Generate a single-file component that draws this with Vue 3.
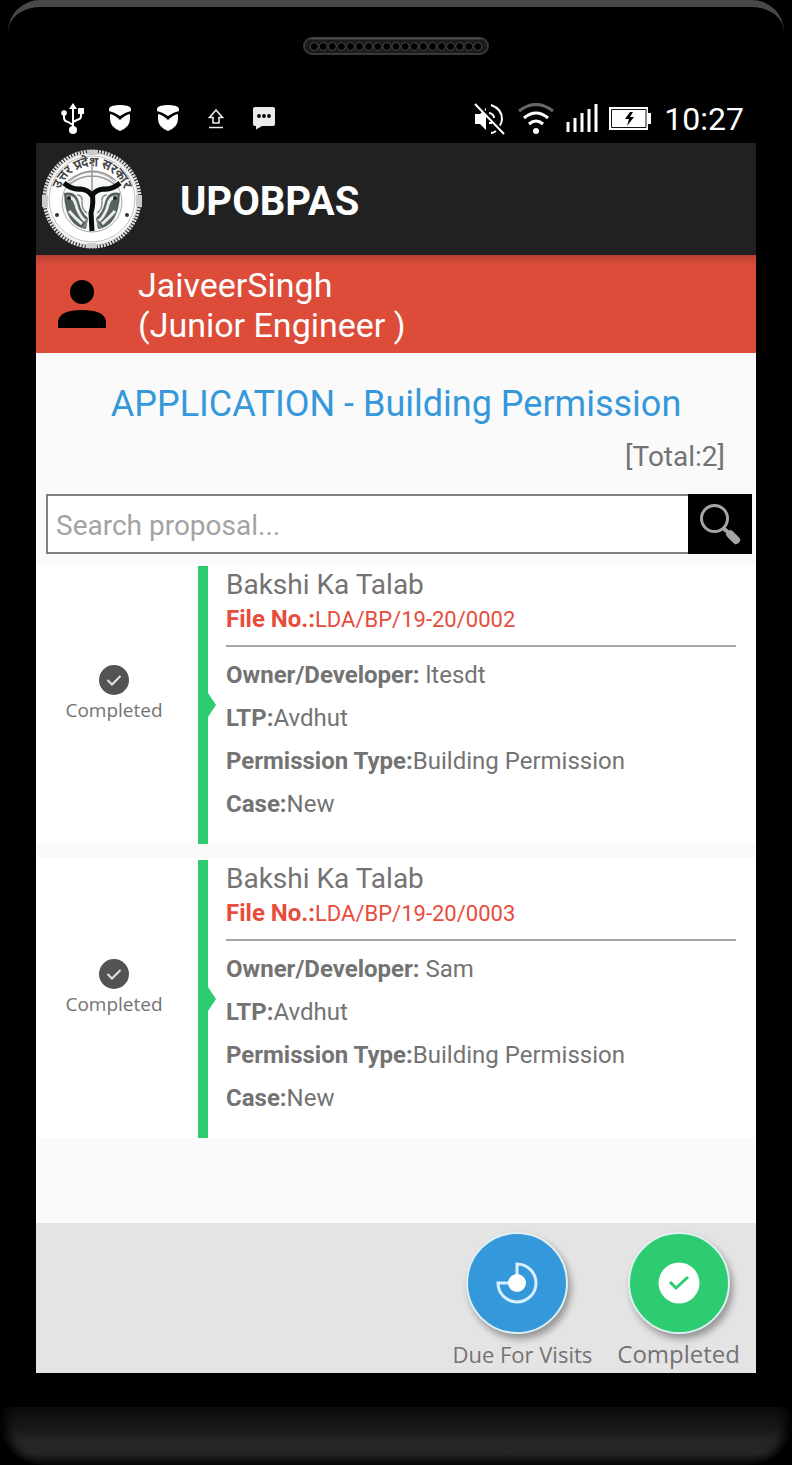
<template>
  <div class="phone">
    <div class="phone-top">
      <svg class="speaker" width="186" height="18" viewBox="0 0 186 18" aria-hidden="true">
        <rect x="1" y="1" width="184" height="16" rx="8" fill="#1c1c1c" stroke="#383838" stroke-width="2" />
        <path d="M8 1.5H178" stroke="#4a4a4a" stroke-width="2" />
        <circle v-for="n in 19" :key="n" :cx="2 + n * 9.1" cy="9.5" r="4" fill="#000" stroke="#484848" />
      </svg>
    </div>

    <main class="screen">
      <div class="status-bar">
        <div class="status-left">
          <svg width="24" height="34" viewBox="0 0 24 34" fill="none" stroke="#fff" stroke-width="2">
            <path d="M13 5V28M4 11v5q0 3 4 4l5 3M21 9v5q0 3-4 4l-4 2" />
            <path d="M13 1l4 6H9z" fill="#fff" stroke="none" />
            <circle cx="13" cy="28" r="4" fill="#fff" stroke="none" />
            <circle cx="4" cy="11" r="2.8" fill="#fff" stroke="none" />
            <path d="M18 6h6v6h-6z" fill="#fff" stroke="none" />
          </svg>
          <svg v-for="n in 2" :key="n" width="24" height="28" viewBox="0 0 24 28" fill="#fff">
            <path d="M1 4Q1 2 4 1Q12-1 20 1Q23 2 23 4V6Q18 7 12 11Q6 7 1 6z" />
            <path d="M2 9Q7 10 12 15Q17 10 22 9V14Q22 22 12 26Q2 22 2 14z" />
          </svg>
          <svg width="24" height="24" viewBox="0 0 24 24" fill="none" stroke="#e8e8e8" stroke-width="1.6">
            <path d="M12 3L5.500 10.500H9V16H15V10.500H18.500zM5 20.500H19" />
          </svg>
          <svg width="24" height="26" viewBox="0 0 24 26">
            <path d="M3 1H21Q23 1 23 3V18Q23 20 21 20H10L4 23.500V20H3Q1 20 1 18V3Q1 1 3 1z" fill="#ebebeb" />
            <circle cx="7" cy="10" r="1.900" /><circle cx="12" cy="10" r="1.900" /><circle cx="17" cy="10" r="1.900" />
          </svg>
        </div>
        <div class="status-right">
          <svg width="32" height="32" viewBox="0 0 32 32" fill="none" stroke="#fff" stroke-width="2">
            <path d="M1 11H6L12 5V27L6 21H1z" fill="#fff" stroke="none" />
            <path d="M15 10q5 1 5 5M17 2q11 4 11 14q0 4-3 8M22 28q-3 2-5 2M15 20h3" />
            <path d="M3 1L31 30" stroke="#000" stroke-width="3" />
            <path d="M1 1L30 31" />
          </svg>
          <svg width="38" height="32" viewBox="0 0 38 32" fill="none" stroke="#fff" stroke-width="3">
            <path d="M2 8Q19-5 36 8" stroke="#666" />
            <path d="M7 15Q19 5 31 15M12 21Q19 15 26 21" />
            <circle cx="19" cy="28" r="3" fill="#fff" stroke="none" />
          </svg>
          <svg width="32" height="30" viewBox="0 0 32 30" stroke="#fff" stroke-width="3">
            <path d="M2 28V18M9 28V14M16 28V9M23 28V5M30 28V0" />
          </svg>
          <svg width="42" height="24" viewBox="0 0 42 24">
            <path d="M0 0H39V6H42V17H39V23H0z" fill="#fff" />
            <path d="M2.500 2.500H37V20.500H2.500z" fill="none" stroke="#111" />
            <path d="M21 5L16 12H20L18 19L25 10H21L24 5z" fill="#000" />
          </svg>
          <span class="clock">10:27</span>
        </div>
      </div>

      <header class="app-bar">
        <svg width="100" height="100" viewBox="0 0 100 100" aria-hidden="true">
          <circle cx="50" cy="50" r="46" fill="#fff" />
          <circle cx="50" cy="50" r="47" fill="none" stroke="#ddd" stroke-width="5" stroke-dasharray="2 1" />
          <path d="M45 1h10v5H45zM45 94h10v5H45zM0 46h6v12H0zM94 46h6v12h-6z" fill="#ccc" />
          <circle cx="50" cy="50" r="43" fill="none" stroke="#bbb" />
          <defs><path id="seal-arc" d="M18 58A33 33 0 1 1 82 58" /></defs>
          <circle cx="50" cy="53" r="30" fill="#f8f8f8" stroke="#aaa" />
          <text class="seal-text"><textPath href="#seal-arc" startOffset="50%" text-anchor="middle">उत्तर प्रदेश सरकार</textPath></text>
          <path d="M26 32Q37 23 50 22Q63 22 74 32M50 14V44M28 35Q38 27 50 27Q62 27 72 35" fill="none" stroke="#999" stroke-width="1.5" />
          <path d="M22 44q12-3 15 9q2 10 9 16l-2 11Q23 77 22 44z" fill="#566160" />
          <path d="M78 44q-12-3-15 9q-2 10-9 16l2 11Q77 77 78 44z" fill="#566160" />
          <path d="M25 48q7-1 9 8t9 16M75 48q-7-1-9 8t-9 16M27 62q7 8 13 13M73 62q-7 8-13 13" fill="none" stroke="#e8eceb" stroke-width="3" />
          <path d="M35 46q6 0 5 8q0 7 5 10M65 46q-6 0-5 8q0 7-5 10M41 79q4-4 4-10M59 79q-4-4-4-10" fill="none" stroke="#899190" stroke-width="1.5" />
          <circle cx="27" cy="49" r="2" fill="#222" /><circle cx="73" cy="49" r="2" fill="#222" />
          <path d="M22 34Q30 41 39 40Q47 41 50 47Q53 41 61 40Q70 41 78 34M50 43Q52 54 49 64L50 82" fill="none" stroke="#080c0c" stroke-width="5" />
          <circle cx="15" cy="66" r="2" fill="#333" /><circle cx="85" cy="66" r="2" fill="#333" />
        </svg>
        <h1>UPOBPAS</h1>
      </header>

      <section class="user">
        <svg width="50" height="50" viewBox="0 0 50 50" aria-hidden="true">
          <circle cx="25" cy="12" r="12" />
          <path d="M1 48V41Q3 30 25 30Q47 30 49 41V48z" />
        </svg>
        <p>JaiveerSingh<br>(Junior Engineer )</p>
      </section>

      <h2>APPLICATION - Building Permission</h2>
      <p class="total">[Total:{{ proposals.length }}]</p>

      <form class="search" @submit.prevent>
        <input v-model="query" type="text" aria-label="Search proposal" placeholder="Search proposal...">
        <button type="submit" aria-label="Search">
          <svg width="64" height="60" viewBox="0 0 64 60" fill="none" stroke="#a5a5a5">
            <circle cx="26.500" cy="24.500" r="13" stroke-width="3" />
            <path d="M35 34L41 39" stroke-width="4" />
            <path d="M40 38L50 48" stroke-width="7" />
            <path d="M43 41L48 46" stroke-width="8" stroke-linecap="round" />
          </svg>
        </button>
      </form>

      <ul class="list">
        <li v-for="item in filtered" :key="item.fileNo" class="card">
          <div class="state">
            <svg width="30" height="30" viewBox="0 0 30 30" aria-hidden="true">
              <circle cx="15" cy="15" r="15" fill="#525354" />
              <path d="M8.500 15L13 19.500L21.500 11" fill="none" stroke="#e5e5e5" stroke-width="2" />
            </svg>
            <span>Completed</span>
          </div>
          <div class="divider"></div>
          <div class="details">
            <h3>{{ item.area }}</h3>
            <p class="file"><b>File No.:</b>{{ item.fileNo }}</p>
            <p><b>Owner/Developer:</b> {{ item.owner }}</p>
            <p><b>LTP:</b>{{ item.ltp }}</p>
            <p><b>Permission Type:</b>{{ item.type }}</p>
            <p><b>Case:</b>{{ item.kind }}</p>
          </div>
        </li>
      </ul>

      <nav class="actions">
        <button type="button" class="action">
          <span class="round blue">
            <svg width="44" height="44" viewBox="0 0 44 44">
              <path d="M22 22V3A19 19 0 1 1 3 22z" fill="none" stroke="#d9efff" stroke-width="3" />
              <circle cx="22" cy="22" r="9" fill="#fff" />
            </svg>
          </span>
          <span>Due For Visits</span>
        </button>
        <button type="button" class="action done">
          <span class="round green">
            <svg width="42" height="42" viewBox="0 0 42 42">
              <circle cx="21" cy="21" r="20.500" fill="#fff" />
              <path d="M12 20L18 26L30 15" fill="none" stroke="#2ecc71" stroke-width="3" />
            </svg>
          </span>
          <span>Completed</span>
        </button>
      </nav>
    </main>

    <div class="phone-bottom"></div>
  </div>
</template>

<script setup>
import { computed, ref } from 'vue'

const query = ref('')

const proposals = [
  { area: 'Bakshi Ka Talab', fileNo: 'LDA/BP/19-20/0002', owner: 'ltesdt', ltp: 'Avdhut', type: 'Building Permission', kind: 'New' },
  { area: 'Bakshi Ka Talab', fileNo: 'LDA/BP/19-20/0003', owner: 'Sam', ltp: 'Avdhut', type: 'Building Permission', kind: 'New' }
]

const filtered = computed(() => {
  const text = query.value.toLowerCase()
  return proposals.filter(item => Object.values(item).join(' ').toLowerCase().includes(text))
})
</script>

<style>
body {
  margin: 0;
  background: #000;
}
</style>

<style scoped>
.phone {
  min-height: 100vh;
  display: flex;
  flex-direction: column;
  background: #000;
  font-family: Roboto, sans-serif;
  color: #737373;
}

.phone * {
  box-sizing: border-box;
}

h1,
h2,
h3,
p {
  margin: 0;
  font-weight: 400;
}

b {
  font-weight: 700;
}

svg {
  display: block;
  flex-shrink: 0;
}

button {
  border: 0;
  padding: 0;
  background: none;
  color: inherit;
  cursor: pointer;
}

/* phone body */
.phone-top {
  height: 95px;
  margin: 0 8px;
  padding-top: 30px;
  border-top: 7px solid #484848;
  border-radius: 32px 32px 0 0;
  display: flex;
  justify-content: center;
}

.phone-bottom {
  height: 58px;
  margin-top: 34px;
  border-radius: 0 0 44px 44px;
  background: linear-gradient(#0c0c0c, #191919 40%, #262626 60%, #242424 80%, #080808);
  box-shadow: inset 12px 0 10px -6px #000, inset -12px 0 10px -6px #000;
}

.screen {
  flex: 1;
  margin: 0 36px;
  display: flex;
  flex-direction: column;
  background: #fafafa;
}

.status-bar {
  height: 48px;
  padding: 0 12px 0 24px;
  display: flex;
  align-items: center;
  justify-content: space-between;
  background: #000;
  color: #fff;
}

.status-left {
  display: flex;
  align-items: center;
  gap: 24px;
}

.status-right {
  display: flex;
  align-items: center;
  gap: 11px;
}

.clock {
  padding-left: 2px;
  font-size: 32px;
  line-height: 48px;
}

/* header */
.app-bar {
  height: 112px;
  padding: 0 6px;
  display: flex;
  align-items: center;
  gap: 38px;
  background: #212121;
  color: #fff;
}

.seal-text {
  font-size: 13px;
  font-weight: 700;
  fill: #444;
}

h1 {
  padding-top: 6px;
  font-size: 40px;
  font-weight: 700;
  line-height: 48px;
}

.user {
  padding: 10px 21px 8px;
  display: flex;
  align-items: center;
  gap: 31px;
  background: linear-gradient(#b34032, #d64a39 8px, #dd4b39 16px);
  color: #fff;
  font-size: 34px;
  line-height: 40px;
}

h2 {
  padding-top: 27px;
  font-size: 36px;
  line-height: 48px;
  text-align: center;
  color: #3498db;
}

.total {
  padding: 12px 31px 20px;
  font-size: 28px;
  line-height: 34px;
  text-align: right;
}

.search {
  margin: 0 4px 10px 10px;
  display: flex;
}

.search input {
  flex: 1;
  min-width: 0;
  height: 60px;
  padding: 2px 8px 0;
  border: 2px solid #808080;
  border-right: 0;
  border-radius: 0;
  outline: 0;
  background: #fff;
  font: 28px Roboto, sans-serif;
  color: #737373;
}

.search input::placeholder {
  color: #a3a3a3;
  opacity: 1;
}

.search button {
  background: #000;
}

/* proposals */
.list {
  flex: 1;
  margin: 0;
  padding: 0;
  list-style: none;
  display: flex;
  flex-direction: column;
  gap: 14px;
}

.card {
  padding-top: 2px;
  display: flex;
  background: #fff;
}

.state {
  width: 162px;
  padding: 0 6px 22px 0;
  display: flex;
  flex-direction: column;
  align-items: center;
  justify-content: center;
  gap: 2px;
  font-family: 'Open Sans', sans-serif;
  font-size: 19px;
  line-height: 26px;
}

.divider {
  position: relative;
  width: 10px;
  background: #2ecc71;
}

.divider::after {
  content: '';
  position: absolute;
  left: 100%;
  top: 50%;
  margin-top: -12px;
  border: 12px solid transparent;
  border-left: 8px solid #2ecc71;
  border-right: 0;
}

.details {
  flex: 1;
  padding: 0 20px 18px 18px;
  font-size: 24px;
  line-height: 43px;
}

h3 {
  font-size: 28px;
  line-height: 38px;
}

.details .file {
  margin-bottom: 7px;
  padding-bottom: 10px;
  border-bottom: 2px solid #a6a6a6;
  font-size: 22px;
  line-height: 30px;
  color: #e74c3c;
}

.file b {
  font-size: 24px;
}

/* bottom buttons */
.actions {
  padding: 9px 16px 3px;
  display: flex;
  justify-content: flex-end;
  gap: 25px;
  background: #e4e4e4;
}

.action {
  display: flex;
  flex-direction: column;
  align-items: center;
  gap: 4px;
  font-family: 'Open Sans', sans-serif;
  font-size: 22px;
  line-height: 32px;
}

.done {
  font-size: 24px;
}

.round {
  width: 102px;
  height: 102px;
  margin-right: 10px;
  display: flex;
  align-items: center;
  justify-content: center;
  border: 2px solid #dff0f5;
  border-radius: 50%;
  box-shadow: 3px 5px 7px rgba(0, 0, 0, 0.35);
}

.done .round {
  margin-right: 0;
}

.blue {
  background: #3498db;
}

.green {
  background: #2ecc71;
}
</style>
